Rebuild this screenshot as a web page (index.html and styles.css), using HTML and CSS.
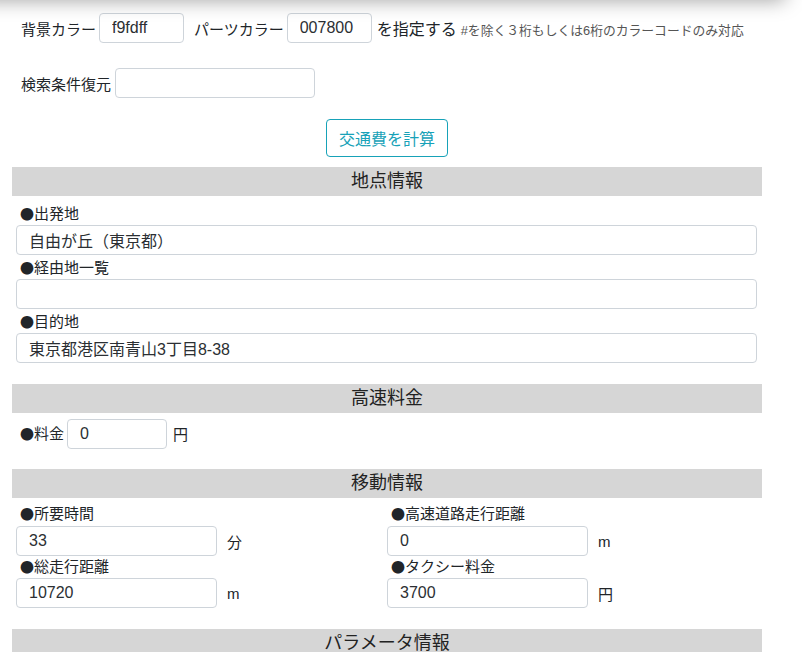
FILE: index.html
```html
<!DOCTYPE html>
<html lang="ja">
<head>
<meta charset="utf-8">
<title>交通費計算</title>
<link rel="stylesheet" href="styles.css">
</head>
<body>
<div class="shade"></div>
<div class="container">
  <div class="top">
    <div class="row row-color">
      <span class="lbl">背景カラー</span>
      <input class="ctrl ctrl-color" type="text" value="f9fdff">
      <span class="lbl lbl-gap">パーツカラー</span>
      <input class="ctrl ctrl-color" type="text" value="007800">
      <span class="lbl-big">を指定する</span>
      <small class="note">#を除く３桁もしくは6桁のカラーコードのみ対応</small>
    </div>
    <div class="row row-restore">
      <span class="lbl">検索条件復元</span>
      <input class="ctrl ctrl-restore" type="text" value="">
    </div>
  </div>
  <div class="btn-row">
    <button class="btn" type="button">交通費を計算</button>
  </div>

  <section class="sec">
    <h2 class="sec-head">地点情報</h2>
    <div class="sec-body">
      <div class="field-label"><span class="dot">●</span>出発地</div>
      <input class="ctrl ctrl-full" type="text" value="自由が丘（東京都）">
      <div class="field-label"><span class="dot">●</span>経由地一覧</div>
      <input class="ctrl ctrl-full" type="text" value="">
      <div class="field-label"><span class="dot">●</span>目的地</div>
      <input class="ctrl ctrl-full" type="text" value="東京都港区南青山3丁目8-38">
    </div>
  </section>

  <section class="sec">
    <h2 class="sec-head">高速料金</h2>
    <div class="sec-body sec-fee">
      <div class="inline-row">
        <span class="field-label inline"><span class="dot">●</span>料金</span>
        <input class="ctrl ctrl-fee" type="text" value="0">
        <span class="unit">円</span>
      </div>
    </div>
  </section>

  <section class="sec">
    <h2 class="sec-head">移動情報</h2>
    <div class="sec-body sec-move grid2">
      <div class="cell">
        <div class="field-label sm"><span class="dot">●</span>所要時間</div>
        <div class="inline-row"><input class="ctrl ctrl-half" type="text" value="33"><span class="unit">分</span></div>
      </div>
      <div class="cell">
        <div class="field-label sm"><span class="dot">●</span>高速道路走行距離</div>
        <div class="inline-row"><input class="ctrl ctrl-half" type="text" value="0"><span class="unit">m</span></div>
      </div>
      <div class="cell">
        <div class="field-label sm2"><span class="dot">●</span>総走行距離</div>
        <div class="inline-row"><input class="ctrl ctrl-half" type="text" value="10720"><span class="unit">m</span></div>
      </div>
      <div class="cell">
        <div class="field-label sm2"><span class="dot">●</span>タクシー料金</div>
        <div class="inline-row"><input class="ctrl ctrl-half" type="text" value="3700"><span class="unit">円</span></div>
      </div>
    </div>
  </section>

  <section class="sec">
    <h2 class="sec-head">パラメータ情報</h2>
    <div class="sec-body"></div>
  </section>
</div>
</body>
</html>
```

FILE: styles.css
```css
html, body {
  margin: 0;
  padding: 0;
  background: #fff;
}
body {
  font-family: "Liberation Sans", "Noto Sans CJK JP", sans-serif;
  color: #212529;
  font-size: 15px;
  overflow: hidden;
}
.shade {
  position: fixed;
  top: -30px;
  left: -20px;
  width: 805px;
  height: 30px;
  box-shadow: 0 0 20px rgba(0, 0, 0, 0.38);
  z-index: 5;
}
.container {
  width: 750px;
  margin-left: 12px;
}
.top {
  padding-left: 9px;
  padding-top: 13px;
}
.row {
  display: flex;
  align-items: center;
  height: 30px;
}
.row-restore {
  margin-top: 25px;
}
.lbl {
  font-size: 15px;
  margin-right: 3px;
}
.row-restore .lbl {
  margin-right: 4px;
}
.lbl-gap {
  margin-left: 10px;
  margin-right: 3px;
}
.lbl-big {
  font-size: 16px;
  margin-left: 5px;
  margin-right: 4px;
}
.note {
  font-size: 12.8px;
  color: #555;
  padding-top: 2px;
}
.ctrl {
  box-sizing: border-box;
  height: 30px;
  border: 1px solid #ced4da;
  border-radius: 4px;
  padding: 0 12px;
  font-family: "Liberation Sans", "Noto Sans CJK JP", sans-serif;
  font-size: 16px;
  color: #2b2f33;
  background: #fff;
  outline: none;
}
.ctrl-color {
  width: 85px;
}
.ctrl-restore {
  width: 200px;
}
.btn-row {
  display: flex;
  justify-content: center;
  margin-top: 21px;
}
.btn {
  box-sizing: border-box;
  height: 38px;
  width: 122px;
  border: 1px solid #17a2b8;
  border-radius: 4px;
  background: #fff;
  color: #17a2b8;
  font-family: "Liberation Sans", "Noto Sans CJK JP", sans-serif;
  font-size: 16px;
  padding: 0;
}
.sec {
  margin-top: 10px;
}
.sec + .sec {
  margin-top: 0;
}
.sec-head {
  margin: 0;
  height: 29px;
  line-height: 29px;
  background: #d6d6d6;
  text-align: center;
  font-size: 18px;
  font-weight: normal;
  color: #222;
}
.sec-body {
  padding: 5px 5px 21px 4px;
}
.sec-fee {
  padding-bottom: 20px;
}
.sec-move {
  padding-top: 4px;
  padding-bottom: 21px;
}
.dot {
  font-family: "Noto Sans CJK JP", sans-serif;
  font-size: 14px;
}
.field-label {
  height: 24px;
  line-height: 24px;
  padding-left: 4px;
  font-size: 15px;
}
.field-label.sm {
  height: 24px;
  line-height: 22px;
}
.field-label.sm2 {
  height: 22px;
  line-height: 20px;
}
.ctrl-full {
  display: block;
  width: 741px;
}
.inline-row {
  display: flex;
  align-items: center;
}
.field-label.inline {
  height: auto;
  line-height: 30px;
  margin-right: 3px;
}
.ctrl-fee {
  width: 100px;
}
.unit {
  font-size: 15px;
  margin-left: 6px;
}
.grid2 {
  display: grid;
  grid-template-columns: 371px 370px;
}
.ctrl-half {
  width: 201px;
}
.grid2 .unit {
  margin-left: 10px;
}
```
